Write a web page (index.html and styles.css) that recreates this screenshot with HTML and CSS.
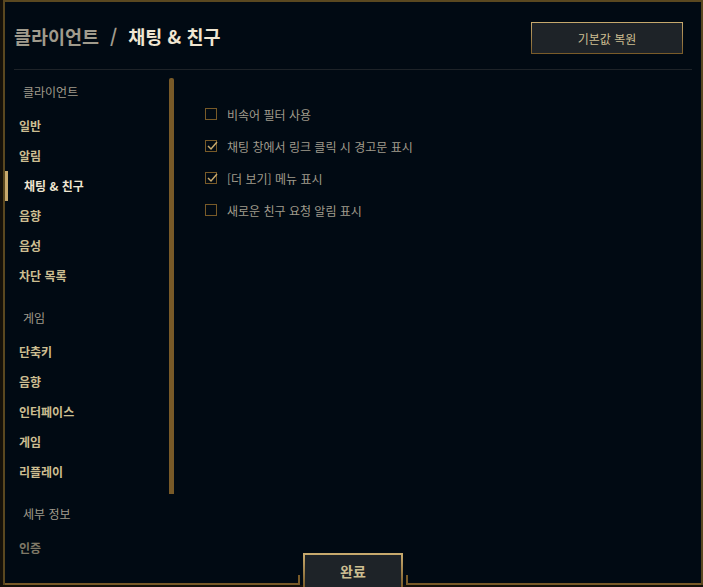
FILE: index.html
```html
<!DOCTYPE html>
<html lang="ko">
<head>
  <meta charset="UTF-8">
  <title>설정 - 채팅 & 친구</title>
  <link rel="stylesheet" href="styles.css">
</head>
<body>
  <div class="window">
    <header class="header">
      <h1 class="title"><span class="crumb">클라이언트</span><span class="sep">/</span><span class="current">채팅 &amp; 친구</span></h1>
      <button class="btn btn-reset">기본값 복원</button>
    </header>
    <div class="divider"></div>

    <div class="main">
      <aside class="sidebar">
        <nav class="nav">
          <div class="nav-head">클라이언트</div>
          <a class="nav-item">일반</a>
          <a class="nav-item">알림</a>
          <a class="nav-item active">채팅 &amp; 친구</a>
          <a class="nav-item">음향</a>
          <a class="nav-item">음성</a>
          <a class="nav-item">차단 목록</a>

          <div class="nav-head group">게임</div>
          <a class="nav-item">단축키</a>
          <a class="nav-item">음향</a>
          <a class="nav-item">인터페이스</a>
          <a class="nav-item">게임</a>
          <a class="nav-item">리플레이</a>

          <div class="nav-head group">세부 정보</div>
          <a class="nav-item faded">인증</a>
        </nav>
        <div class="scrollbar"></div>
      </aside>

      <section class="options">
        <label class="option">
          <span class="box"></span>
          <span class="text">비속어 필터 사용</span>
        </label>
        <label class="option">
          <span class="box"><svg width="12" height="12" viewBox="0 0 12 12"><polyline points="2,6 5,9 11,2" fill="none" stroke="#c8aa6e" stroke-width="1.5"/></svg></span>
          <span class="text">채팅 창에서 링크 클릭 시 경고문 표시</span>
        </label>
        <label class="option">
          <span class="box"><svg width="12" height="12" viewBox="0 0 12 12"><polyline points="2,6 5,9 11,2" fill="none" stroke="#c8aa6e" stroke-width="1.5"/></svg></span>
          <span class="text">[더 보기] 메뉴 표시</span>
        </label>
        <label class="option">
          <span class="box"></span>
          <span class="text">새로운 친구 요청 알림 표시</span>
        </label>
      </section>
    </div>

    <footer class="footer">
      <div class="bracket left"></div>
      <div class="slot"></div>
      <div class="bracket right"></div>
    </footer>
    <button class="btn btn-done">완료</button>
  </div>
</body>
</html>
```

FILE: styles.css
```css
* {
  margin: 0;
  padding: 0;
  box-sizing: border-box;
}
body {
  background: #15110a;
  width: 703px;
  height: 587px;
  overflow: hidden;
  font-family: 'Noto Sans CJK KR', 'Noto Sans', sans-serif;
}
.window {
  position: relative;
  margin-left: 3px;
  width: 700px;
  height: 585px;
  background: #010a13;
  border: 2px solid #5a4820;
  border-bottom: none;
  display: flex;
  flex-direction: column;
}

/* Header */
.header {
  display: flex;
  justify-content: space-between;
  align-items: center;
  padding: 20px 18px 0 9px;
}
.title {
  font-size: 18.5px;
  font-weight: bold;
  display: flex;
  align-items: center;
  margin-top: -4px;
}
.crumb {
  color: #a09b8c;
}
.sep {
  color: #a09b8c;
  margin: 0 11px;
}
.current {
  color: #f0e6d2;
}
.btn {
  font-family: inherit;
  background: #1e2328;
  color: #cdbe91;
  cursor: pointer;
  border: 1px solid #c8aa6e;
  border-image: linear-gradient(180deg, #c8aa6e, #785a28) 1;
}
.btn-reset {
  width: 152px;
  height: 32px;
  font-size: 12px;
}
.divider {
  height: 1px;
  background: #1e2328;
  margin: 15px 9px 0 9px;
}

/* Main */
.main {
  flex: 1;
  display: flex;
  overflow: hidden;
}
.sidebar {
  display: flex;
  width: 170px;
}
.nav {
  width: 164px;
  padding-top: 7px;
  display: flex;
  flex-direction: column;
}
.nav-head {
  height: 30px;
  line-height: 30px;
  padding-left: 18px;
  margin-bottom: 4px;
  color: #a09b8c;
  font-size: 12px;
}
.nav-head.group {
  margin-top: 12px;
}
.nav-item {
  height: 30px;
  line-height: 30px;
  padding-left: 14px;
  color: #cdbe91;
  font-size: 12px;
  font-weight: bold;
  cursor: pointer;
}
.nav-item.active {
  color: #f0e6d2;
  border-left: 3px solid #c8aa6e;
  padding-left: 16px;
}
.nav-item.faded {
  color: #7e7866;
}
.scrollbar {
  width: 5px;
  height: 416px;
  margin-top: 8px;
  background: #785a28;
  border-radius: 2px 2px 0 0;
}

.options {
  padding: 28px 0 0 30px;
  display: flex;
  flex-direction: column;
}
.option {
  height: 32px;
  display: flex;
  align-items: center;
  cursor: pointer;
}
.box {
  width: 12px;
  height: 12px;
  border: 1px solid #785a28;
  display: flex;
  align-items: center;
  justify-content: center;
}
.box svg {
  flex: none;
  margin: 0 -2px 0 0;
}
.text {
  margin-left: 10px;
  color: #a09b8c;
  font-size: 12px;
}

/* Footer */
.footer {
  height: 10px;
  display: flex;
}
.bracket {
  flex: 1;
  border-bottom: 2px solid #785a28;
}
.bracket.left {
  border-right: 2px solid #785a28;
}
.bracket.right {
  border-left: 2px solid #785a28;
}
.slot {
  width: 106px;
}
.btn-done {
  position: absolute;
  left: 298px;
  bottom: -4px;
  width: 100px;
  height: 36px;
  font-size: 14px;
  font-weight: bold;
  border-width: 2px;
}
```
